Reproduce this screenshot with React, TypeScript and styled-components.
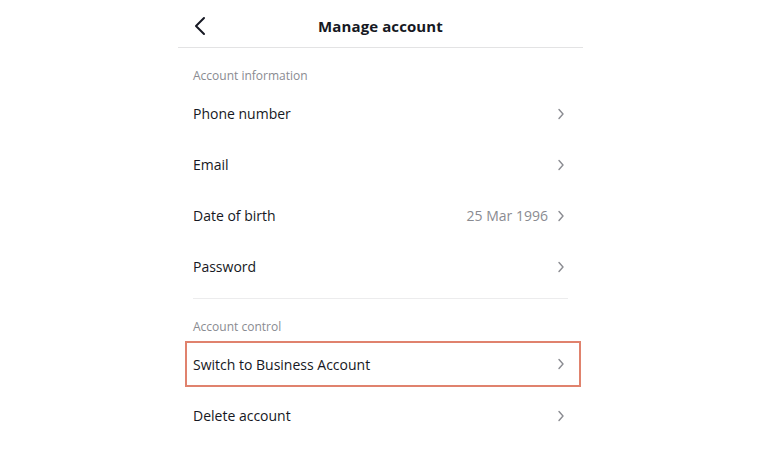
import React from 'react'
import styled, { createGlobalStyle } from 'styled-components'

const GlobalStyle = createGlobalStyle`
    body {
        margin: 0;
        background: #ffffff;
        font-family: "Open Sans", "Liberation Sans", sans-serif;
        color: #161823;
    }
`

interface Item {
    label: string
    value?: string
    highlighted?: boolean
}

interface Section {
    title: string
    items: Item[]
}

const sections: Section[] = [
    {
        title: 'Account information',
        items: [
            { label: 'Phone number' },
            { label: 'Email' },
            { label: 'Date of birth', value: '25 Mar 1996' },
            { label: 'Password' },
        ],
    },
    {
        title: 'Account control',
        items: [
            { label: 'Switch to Business Account', highlighted: true },
            { label: 'Delete account' },
        ],
    },
]

const BackIcon = () => (
    <svg width="14" height="20" viewBox="0 0 14 20" fill="none">
        <path d="M11 2 L3 10 L11 18" stroke="#161823" strokeWidth="2" strokeLinecap="round" strokeLinejoin="round" />
    </svg>
)

const Chevron = () => (
    <svg width="8" height="12" viewBox="0 0 8 12" fill="none">
        <path d="M2 1.5 L6 6 L2 10.5" stroke="#8a8b91" strokeWidth="1.4" strokeLinecap="round" strokeLinejoin="round" />
    </svg>
)

const App = () => {
    return (
        <Page>
            <GlobalStyle />
            <Panel>
                <Header>
                    <BackButton><BackIcon /></BackButton>
                    <Title>Manage account</Title>
                </Header>
                {sections.map((section, i) => (
                    <Group key={section.title} divided={i > 0}>
                        <GroupTitle>{section.title}</GroupTitle>
                        {section.items.map(item => (
                            <Row key={item.label} highlighted={item.highlighted}>
                                <Label>{item.label}</Label>
                                <Trailing>
                                    {item.value && <Value>{item.value}</Value>}
                                    <Chevron />
                                </Trailing>
                            </Row>
                        ))}
                    </Group>
                ))}
            </Panel>
        </Page>
    )
}

const Page = styled.div`
    width: 760px;
    height: 450px;
    display: flex;
    justify-content: center;
    overflow: hidden;
`

const Panel = styled.div`
    width: 405px;
    margin-left: 1px;
    display: flex;
    flex-direction: column;
`

const Header = styled.div`
    position: relative;
    height: 47px;
    display: flex;
    align-items: center;
    justify-content: center;
    border-bottom: 1px solid #e3e3e4;
`

const BackButton = styled.div`
    position: absolute;
    left: 15px;
    top: 16px;
    display: flex;
`

const Title = styled.div`
    font-size: 15px;
    font-weight: 700;
    margin-top: 5px;
    letter-spacing: 0.1px;
`

const Group = styled.div<{ divided?: boolean }>`
    margin: 0 15px;
    padding-top: 18px;
    border-top: ${p => (p.divided ? '1px solid #ececed' : 'none')};
    margin-top: ${p => (p.divided ? '6px' : '0')};
`

const GroupTitle = styled.div`
    font-size: 12px;
    color: #8a8b91;
    height: 20px;
    line-height: 20px;
    margin-bottom: 2px;
`

const Row = styled.div<{ highlighted?: boolean }>`
    height: 51px;
    display: flex;
    align-items: center;
    justify-content: space-between;
    box-sizing: border-box;
    ${p => p.highlighted && `
        height: 46px;
        margin: 4px -13px 3px -8px;
        padding: 0 11px 0 6px;
        border: 2px solid #e0826d;
    `}
`

const Label = styled.div`
    font-size: 14px;
    color: #161823;
`

const Trailing = styled.div`
    display: flex;
    align-items: center;
    gap: 9px;
    padding-right: 3px;
`

const Value = styled.div`
    font-size: 14px;
    color: #8a8b91;
`

export default App
